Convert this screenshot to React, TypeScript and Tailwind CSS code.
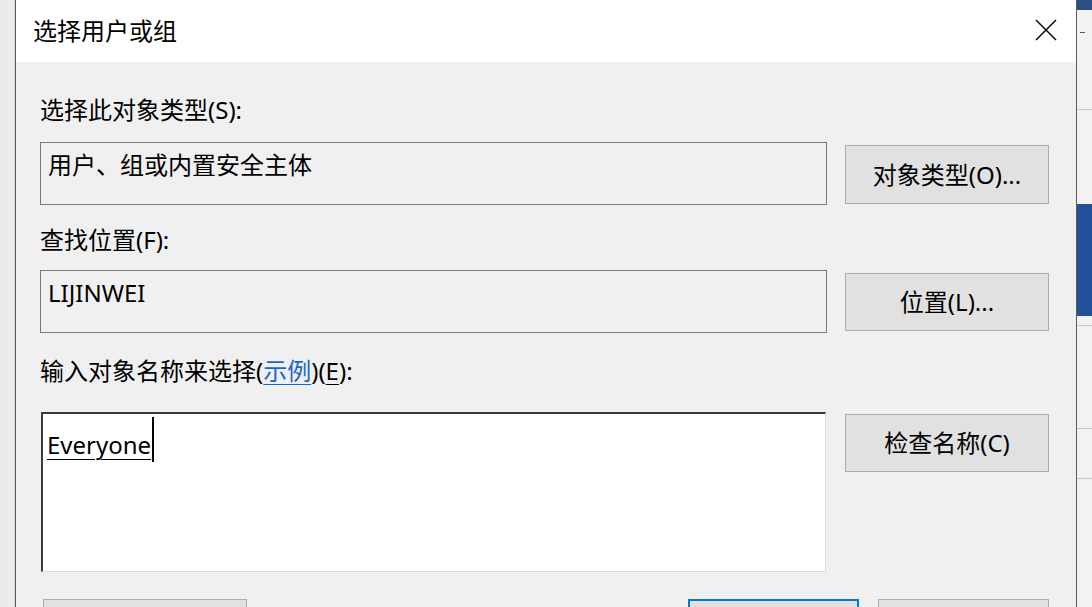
const font = { fontFamily: '"Noto Sans", "Noto Sans CJK SC", sans-serif' };

const Button = ({ label, className = "" }: { label: string; className?: string }) => (
  <button
    className={`flex items-center justify-center border border-[#adadad] bg-[#e1e1e1] text-[24px] leading-[30px] text-black ${className}`}
  >
    {label}
  </button>
);

const ReadOnlyField = ({ value }: { value: string }) => (
  <div className="h-[63px] w-[787px] border border-[#7a7a7a] bg-[#f0f0f0] pl-[7px] pt-[7px] text-[24px] leading-[30px] text-black">
    {value}
  </div>
);

export default function App() {
  return (
    <div className="flex h-[607px] w-[1092px] overflow-hidden bg-[#e9e9e9]" style={font}>
      {/* window behind, left edge */}
      <div className="w-[15px] shrink-0 border-r border-[#d4d4d4] bg-[#ebebeb]" />

      {/* dialog */}
      <div className="flex w-[1062px] shrink-0 flex-col border-x border-[#5c5c5c]">
        <div className="flex h-[62px] shrink-0 items-center justify-between bg-white pl-[17px] pr-[19px]">
          <span className="text-[24px] leading-[30px] text-black">选择用户或组</span>
          <svg width="22" height="22" viewBox="0 0 22 22" className="mt-[-2px]">
            <path d="M1 1L21 21M21 1L1 21" stroke="#111" strokeWidth="1.6" />
          </svg>
        </div>

        <div className="flex flex-1 flex-col bg-[#f0f0f0] pl-[24px] pr-[27px] pt-[33px]">
          <div className="mb-[17px] text-[24px] leading-[30px] text-black">选择此对象类型(S):</div>
          <div className="grid grid-cols-[787px_204px] gap-x-[18px]">
            <ReadOnlyField value="用户、组或内置安全主体" />
            <Button label="对象类型(O)..." className="mt-[3px] h-[59px]" />
          </div>

          <div className="mb-[15px] mt-[20px] text-[24px] leading-[30px] text-black">查找位置(F):</div>
          <div className="grid grid-cols-[787px_204px] gap-x-[18px]">
            <ReadOnlyField value="LIJINWEI" />
            <Button label="位置(L)..." className="mt-[3px] h-[58px]" />
          </div>

          <div className="mb-[26px] mt-[23px] text-[24px] leading-[30px] text-black">
            输入对象名称来选择(
            <span className="text-[#1a66c8] underline decoration-1 underline-offset-4">示例</span>)(
            <span className="underline decoration-1 underline-offset-4">E</span>):
          </div>
          <div className="grid grid-cols-[787px_204px] gap-x-[18px]">
            <div className="ml-[1px] h-[160px] w-[785px] border-b border-l-2 border-r border-t-2 border-b-[#dadada] border-l-[#3a3a3a] border-r-[#dadada] border-t-[#3a3a3a] bg-white pl-[4px] pt-[3px]">
              <div className="flex items-start">
                <span className="mt-[13px] text-[24px] leading-[30px] text-black underline decoration-1 underline-offset-[5px]">
                  Everyone
                </span>
                <span className="ml-[1px] h-[45px] w-[2px] bg-black" />
              </div>
            </div>
            <Button label="检查名称(C)" className="mt-[2px] h-[58px]" />
          </div>

          {/* bottom buttons, only their top edges are in view */}
          <div className="mt-[27px] flex items-start">
            <div className="ml-[3px] h-[58px] w-[204px] border border-[#adadad] bg-[#e1e1e1]" />
            <div className="flex-1" />
            <div className="h-[58px] w-[171px] border-2 border-[#0078d7] bg-[#e1e1e1]" />
            <div className="ml-[19px] h-[58px] w-[171px] border border-[#adadad] bg-[#e1e1e1]" />
          </div>
        </div>
      </div>

      {/* window behind, right edge */}
      <div className="flex flex-1 flex-col bg-[#f2f2f2]">
        <div className="h-[10px] bg-[#2c4f86]" />
        <div className="relative h-[100px] border-b border-[#c8c8c8]">
          <span className="absolute left-[3px] top-[22px] h-[1px] w-[5px] bg-[#555]" />
        </div>
        <div className="h-[94px]" />
        <div className="h-[112px] bg-[#22509a]" />
        <div className="h-[10px] border-b border-[#c8c8c8]" />
        <div className="h-[103px] border-b border-[#c8c8c8]" />
        <div className="h-[50px] border-b border-[#c8c8c8]" />
        <div className="flex-1" />
      </div>
    </div>
  );
}
